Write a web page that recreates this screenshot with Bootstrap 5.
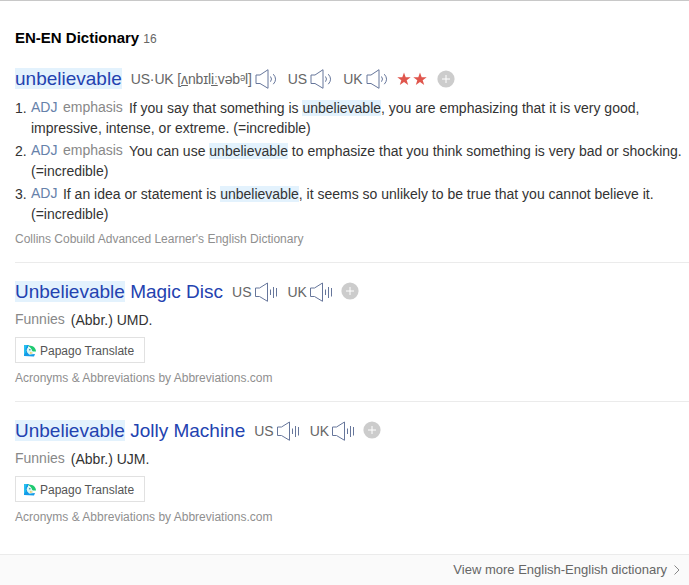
<!DOCTYPE html>
<html lang="en">
<head>
<meta charset="utf-8">
<meta name="viewport" content="width=device-width, initial-scale=1">
<title>EN-EN Dictionary</title>
<link rel="stylesheet" href="https://cdn.jsdelivr.net/npm/bootstrap@5.3.0/dist/css/bootstrap.min.css">
<style>
body { font-family: "Liberation Sans", Arial, sans-serif; font-size: 14px; line-height: 20px; color: #333; background: #fff; }
.page { height: 585px; border-top: 1px solid #c8c8c8; overflow: hidden; }
.content { padding: 27px 0 0 15px; min-height: 0; }
h2 { font-size: 15px; line-height: 20px; color: #000; font-weight: 700; }
.count { font-size: 12px; color: #666; margin-left: 4px; }
.hit { background: #e3f2fd; }
.head-row { height: 24px; color: #666; white-space: nowrap; }
.headword-row { margin-top: 18px; }
.label { margin-left: 9px; }
.phonetic { margin-left: 9px; width: 121px; letter-spacing: -.14px; }
.speaker { width: 24px; height: 20px; margin-left: 3px; }
.star { width: 14px; height: 14px; margin-right: 2px; }
.stars { margin-left: 7px; }
.add { width: 18px; height: 18px; margin-left: 8px; }
.entry .add { margin-left: 7px; margin-bottom: 2px; }
.word { font-size: 19px; line-height: 22px; color: #2342b0; text-decoration: none; }
.word .hit { display: inline-block; height: 21px; line-height: 21px; }
.defs { padding-top: 7px; }
.defs li { margin-bottom: 3px; }
.num { width: 16px; flex: none; }
.pos { color: #6681aa; margin-right: 5.5px; position: relative; top: -1px; }
.tag { color: #888; margin-right: 6px; position: relative; top: -1px; }
.source { font-size: 12px; line-height: 16px; color: #8f8f8f; margin-top: 7px; }
.featured { height: 195px; }
.entry { border-top: 1px solid #ebebeb; padding-top: 17px; height: 139px; }
.meaning { margin-top: 6px; }
.papago { width: 130px; height: 26px; border: 1px solid #e1e1e1; font-size: 12px; color: #555; text-decoration: none; padding: 1px 0 0 8px; margin-top: 7px; }
.more { height: 31px; background: #fafafa; border-top: 1px solid #ebebeb; font-size: 13px; color: #666; padding-right: 9px; }
.more a { color: #666; text-decoration: none; }
svg { display: block; flex: none; }
</style>
</head>
<body>
<svg width="0" height="0" class="position-absolute" aria-hidden="true">
  <symbol id="wave" viewBox="0.5 0 24 20"><g fill="none" stroke="#66769b"><path d="M1.5 6H5.5L13.500 .7V19.300L5.500 14.500H1.500Z"/><path d="M16 7.500Q18 10 16 12.700M18.800 5.200Q23.300 10.200 18.800 15.200"/></g></symbol>
  <symbol id="bars" viewBox="1 0 24 20"><g fill="none" stroke="#66769b"><path d="M1.500 6H5.500L13.500 1V19.300L5.500 14.500H1.500Z"/><path d="M16.500 7.500V13M19.500 5V16M22.500 6V14.500"/></g></symbol>
  <symbol id="star" viewBox="0 0 14 14"><path fill="#e0564d" d="M7 0.500 8.700 5.200H13.700L9.700 8.200 11.200 13 7 10.100 2.800 13 4.300 8.200 0.300 5.200H5.300Z"/></symbol>
  <symbol id="plus" viewBox="0 0 18 18"><circle cx="9" cy="9" r="8.600" fill="#ccc"/><path d="M9 5V13M5 9H13" stroke="#fff"/></symbol>
  <symbol id="bird" viewBox="0 0 12 12"><path fill="#149be8" d="M0 0H5L3 5 5 9.500 11 9 10 11.500 0 11Z"/><path fill="#27c0ef" d="M0 0H3L1.500 4 2 7 0 10Z"/><path fill="#1fca70" d="M4 .5C9 0 12 3 12 6.500L8.500 6.500 7 3.500Z"/><path fill="#dcf7f2" d="M2.700 5.500Q3 2 6 2.500L8.500 6.500 9.500 8.500Q4 11 2.700 5.500Z"/><circle cx="5.800" cy="4.800" r=".8" fill="#3f839a"/><path fill="#f6c85c" d="M6 6.700 8.800 8 6.300 9Z"/></symbol>
</svg>
<main class="page d-flex flex-column">
  <div class="content flex-grow-1">
    <div class="d-flex align-items-baseline"><h2 class="m-0">EN-EN Dictionary</h2><span class="count">16</span></div>

    <section class="featured">
      <div class="head-row headword-row d-flex align-items-center">
        <a class="word" href="#"><span class="hit">unbelievable</span></a>
        <span class="phonetic">US·UK [<u>ʌ</u>nbɪl<u>iː</u>vəbᵊl]</span>
        <svg class="speaker"><use href="#wave"/></svg>
        <span class="label">US</span><svg class="speaker"><use href="#wave"/></svg>
        <span class="label">UK</span><svg class="speaker"><use href="#wave"/></svg>
        <div class="stars d-flex"><svg class="star"><use href="#star"/></svg><svg class="star"><use href="#star"/></svg></div>
        <svg class="add"><use href="#plus"/></svg>
      </div>
      <ol class="defs list-unstyled m-0">
        <li class="d-flex"><span class="num">1.</span><div><span class="pos">ADJ</span><span class="tag">emphasis</span>If you say that something is <span class="hit">unbelievable</span>, you are emphasizing that it is very good,<br>impressive, intense, or extreme. (=incredible)</div></li>
        <li class="d-flex"><span class="num">2.</span><div><span class="pos">ADJ</span><span class="tag">emphasis</span>You can use <span class="hit">unbelievable</span> to emphasize that you think something is very bad or shocking.<br>(=incredible)</div></li>
        <li class="d-flex"><span class="num">3.</span><div><span class="pos">ADJ</span>If an idea or statement is <span class="hit">unbelievable</span>, it seems so unlikely to be true that you cannot believe it.<br>(=incredible)</div></li>
      </ol>
      <div class="source">Collins Cobuild Advanced Learner's English Dictionary</div>
    </section>

    <section class="entry">
      <div class="head-row d-flex align-items-center">
        <a class="word" href="#"><span class="hit">Unbelievable</span> Magic Disc</a>
        <span class="label">US</span><svg class="speaker"><use href="#bars"/></svg>
        <span class="label">UK</span><svg class="speaker"><use href="#bars"/></svg>
        <svg class="add"><use href="#plus"/></svg>
      </div>
      <div class="meaning"><span class="tag">Funnies</span>(Abbr.) UMD.</div>
      <a class="papago d-flex align-items-center" href="#"><svg width="12" height="12" class="me-1"><use href="#bird"/></svg>Papago Translate</a>
      <div class="source">Acronyms &amp; Abbreviations by Abbreviations.com</div>
    </section>

    <section class="entry">
      <div class="head-row d-flex align-items-center">
        <a class="word" href="#"><span class="hit">Unbelievable</span> Jolly Machine</a>
        <span class="label">US</span><svg class="speaker"><use href="#bars"/></svg>
        <span class="label">UK</span><svg class="speaker"><use href="#bars"/></svg>
        <svg class="add"><use href="#plus"/></svg>
      </div>
      <div class="meaning"><span class="tag">Funnies</span>(Abbr.) UJM.</div>
      <a class="papago d-flex align-items-center" href="#"><svg width="12" height="12" class="me-1"><use href="#bird"/></svg>Papago Translate</a>
      <div class="source">Acronyms &amp; Abbreviations by Abbreviations.com</div>
    </section>
  </div>
  <footer class="more d-flex align-items-center justify-content-end flex-shrink-0">
    <a class="d-flex align-items-center" href="#">View more English-English dictionary<svg width="6" height="10" viewBox="0 0 6 10" style="margin-left:7px"><path d="M.5.500 5 5 .5 9.500" fill="none" stroke="#888"/></svg></a>
  </footer>
</main>
<script src="https://cdn.jsdelivr.net/npm/bootstrap@5.3.0/dist/js/bootstrap.bundle.min.js"></script>
</body>
</html>
